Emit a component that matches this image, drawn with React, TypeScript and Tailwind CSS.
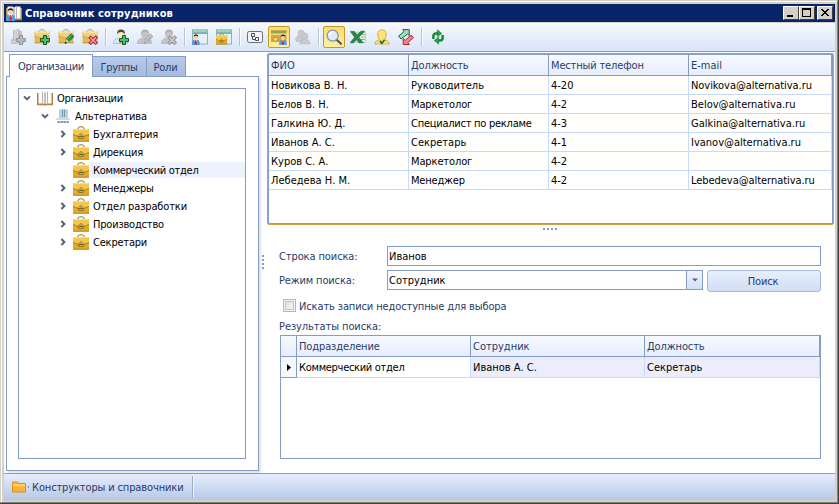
import React from 'react';

type Kids = { children?: React.ReactNode };

const Svg = ({ children, size = 16 }: Kids & { size?: number }) => (
  <svg width={size} height={size} viewBox="0 0 16 16" className="block shrink-0">{children}</svg>
);

const Briefcase = () => (
  <g>
    <path d="M4.500 3Q5.500 .6 8 .6T11.500 3" fill="none" stroke="#a8983c" strokeWidth="1.2" />
    <path d="M0 3h16v12.500H0z" fill="#e2aa28" />
    <path d="M0 3h16v5.500l-5.500 2h-5L0 8.500z" fill="#f3c74e" />
    <path d="M.5 3.500h15" stroke="#fbdc86" />
    <path d="M0 8.500l5.500 2M16 8.500l-5.500 2" fill="none" stroke="#bb8113" strokeWidth="1" />
    <path d="M0 15.200h16" stroke="#b98620" strokeWidth="1" />
    <path d="M5 11q.2-1.600 1.500-2L8 7.400 9.500 9q1.300.4 1.500 2z" fill="#f7d765" stroke="#6d6220" strokeWidth=".8" />
    <rect x="6" y="10.500" width="4" height="2" fill="#e6c24e" stroke="#7b6b24" strokeWidth=".8" />
    <path d="M8 9.200v2" stroke="#4b4318" />
  </g>
);
const Bag = () => (
  <g>
    <path d="M4.500 2.800Q5.500 .6 8 .6T11.500 2.800" fill="none" stroke="#b3a262" strokeWidth="1" />
    <path d="M.5 2.800h15V14H.5z" fill="#e3bb5a" />
    <path d="M.5 2.800h15V7l-5 2h-5l-5-2z" fill="#f0d080" />
    <path d="M1 3.300h14" stroke="#fae7ab" />
    <path d="M.5 7l5 2h5l5-2" fill="none" stroke="#c9973a" strokeWidth=".9" />
    <path d="M.5 13.800h15" stroke="#bd8d34" />
  </g>
);
const Plus = ({ gray = false }: { gray?: boolean }) => (
  <path d="M9.500 6.500h3v3h3v3h-3v3h-3v-3h-3v-3h3z" fill={gray ? '#b9b9bd' : '#4fbd6d'} stroke={gray ? '#909096' : '#075a2a'} strokeWidth="1" />
);
const Pencil = ({ gray = false }: { gray?: boolean }) => (
  <g>
    <path d="M8.200 10 13 4.800 16 7.500 11 12.600z" fill={gray ? '#b5b5b9' : '#23874b'} stroke={gray ? '#a0a0a4' : '#0a6b3a'} strokeWidth=".7" />
    <path d="M8.200 10 7 14.400l4-1.800z" fill={gray ? '#ccc' : '#d7ef8a'} stroke={gray ? '#a0a0a4' : '#8b9a30'} strokeWidth=".6" />
    <path d="M6.600 15l1-2.600 1.500 1.500z" fill={gray ? '#999' : '#1c1c10'} />
    <path d="M9.500 10.300 13.600 6" stroke={gray ? '#ddd' : '#82cb97'} strokeWidth=".8" />
  </g>
);
const Cross = ({ gray = false }: { gray?: boolean }) => (
  <g>
    <path d="M8.700 8.700l5 5M13.700 8.700l-5 5" stroke={gray ? '#919196' : '#a41f34'} strokeWidth="3.400" strokeLinecap="square" />
    <path d="M8.700 8.700l5 5M13.700 8.700l-5 5" stroke={gray ? '#ccc' : '#ff9aa4'} strokeWidth="1.600" strokeLinecap="square" />
  </g>
);
const Person = ({ gray = false }: { gray?: boolean }) => (
  <g>
    <path d="M.5 14.500v-2Q1.500 9.800 5.500 9h4q4 .7 5 3.500v2z" fill={gray ? '#c4c4c8' : '#d3e9fa'} stroke={gray ? '#b3b3b8' : '#8fb9dc'} strokeWidth=".7" />
    <circle cx="8" cy="5.200" r="3.900" fill={gray ? '#c4c4c8' : '#fae7c4'} />
    <path d="M4.200 5Q3.600.8 8 .6q4.300.2 3.900 4.600Q11 3.200 8.400 3 5.600 2.800 4.200 5z" fill={gray ? '#b0b0b5' : '#54492f'} />
    {!gray && <path d="M5.800 9.300l1.600 4.700L9 9.300z" fill="#fff" />}
    {!gray && <path d="M6.900 10h1.200l.5 4H6.400z" fill="#e0823b" />}
  </g>
);
const MiniPerson = () => (
  <g>
    <path d="M0 12.500Q.5 9.500 3 9h2.500q3 .6 3.500 3.500V16H0z" fill="#4d9ee2" />
    <path d="M2.700 9h3.600L4.500 15z" fill="#fff" />
    <path d="M3.900 10h1.200l.8 4-1.400 2-1.400-2z" fill="#dc2921" />
    <circle cx="4.500" cy="6.400" r="2.500" fill="#f9cda2" />
    <path d="M1.800 6.300Q1.700 3.400 4.500 3.300q3 .1 2.800 3Q6 4.800 4.500 5q-1.700 0-2.700 1.300z" fill="#2b1c14" />
  </g>
);
const Card = () => (
  <g>
    <rect x=".5" y=".8" width="15" height="14.200" fill="#e4f1f8" stroke="#8aa9b5" strokeWidth=".9" />
    <path d="M.5 1h15v3.500H.5z" fill="#7fbcb4" />
    <path d="M1 2h14" stroke="#b9e2da" />
    <path d="M1 4.500h14" stroke="#6a98a0" strokeWidth=".7" />
  </g>
);
const Building = () => (
  <g>
    <path d="M3.500 1.500 9 .5v10H3.500zM9 2.500h2.500v8H9z" fill="#c6c6ca" stroke="#b2b2b7" strokeWidth=".7" />
    <path d="M5.200 1.500v9M7.400 1v9.500" stroke="#dedee2" />
    <path d="M1.500 10h12.500l1 2.500H.5z" fill="#c0c0c5" /><path d="M1 13h13v2H1z" fill="#d2d2d6" /><path d="M1.500 14h12" stroke="#aaaab0" strokeDasharray="2 1" />
  </g>
);
const BookIcon = () => (
  <g>
    <path d="M0 3h16v12.200H9L8 16l-1-.8H0z" fill="#b98038" />
    <path d="M1.500 1.500h5L8 2.500V14.500L6.500 13.500h-5z" fill="#fbfbfd" />
    <path d="M14.500 1.500h-5L8 2.500V14.500l1.500-1h5z" fill="#fbfbfd" />
    <path d="M5.500 1.500v12M10.500 1.500v12" stroke="#b4b4bc" strokeWidth="1" />
    <path d="M8 2.500v12" stroke="#85858f" strokeWidth="1" />
  </g>
);

const Btn = ({ children, on = false }: Kids & { on?: boolean }) => (
  <div className={on ? 'flex h-[22px] w-[22px] shrink-0 items-center justify-center rounded-[2px] border border-[#c29b29] bg-linear-to-b from-[#ffd86d] to-[#fff0a1]' : 'flex h-[22px] w-[22px] shrink-0 items-center justify-center'}>
    <Svg>{children}</Svg>
  </div>
);
const Sep = () => (
  <div className="flex h-[18px] w-[5px] shrink-0 justify-center">
    <div className="w-px bg-[#b4c2dc]" /><div className="w-px bg-white" />
  </div>
);

function Toolbar() {
  return (
    <div className="flex h-[29px] shrink-0 items-center gap-[2px] border-b border-[#849cc8] bg-linear-to-b from-[#f5f8ff] to-[#dae5f8] pl-[3px]">
      <Btn><Building /><Plus gray /></Btn>
      <Btn><Bag /><Plus /></Btn>
      <Btn><Bag /><Pencil /></Btn>
      <Btn><Bag /><Cross /></Btn>
      <Sep />
      <Btn><Person /><Plus /></Btn>
      <Btn><Person gray /><Pencil gray /></Btn>
      <Btn><Person gray /><Cross gray /></Btn>
      <Sep />
      <Btn><Card /><g transform="translate(0 2.500) scale(.85)"><MiniPerson /></g></Btn>
      <Btn><Card /><g transform="translate(0 4.500) scale(.7)"><Briefcase /></g></Btn>
      <Sep />
      <Btn>
        <rect x=".5" y="2.500" width="15" height="11" rx="1.700" fill="#f4f4f6" stroke="#6d6d72" />
        <path d="M4.500 4.500h3v3h-3zM8.500 8.500h3v3h-3zM5.500 8v2.500h3" fill="none" stroke="#4c4c52" />
      </Btn>
      <Btn on>
        <path d="M0 1.500h15.500V13H0z" fill="#d4aa3c" /><path d="M0 1.500h15.500v3H0z" fill="#98a158" /><path d="M0 5.200h15.500" stroke="#fae98d" strokeWidth="1.200" />
        <path d="M4 8q2 .4 3 2.500L4.500 12.500 2 10.500z" fill="#f7df75" stroke="#94752a" strokeWidth=".6" />
        <g transform="translate(8.200 2.800) scale(.83)"><MiniPerson /></g>
      </Btn>
      <Btn>
        <g fill="#c9c9ce" stroke="#b9b9bf" strokeWidth=".6"><path d="M.5 10.500q0-3 3-3.500l5 .5 1 4.500-8 .5z" /><circle cx="6" cy="4.200" r="3.200" /><path d="M4.600 15q.2-3.700 3.800-4.600h3q3.600.9 3.900 4.600z" /><circle cx="9.800" cy="7.200" r="3.300" /></g>
      </Btn>
      <Sep />
      <Btn on>
        <path d="M10.600 10.800l4.400 4" stroke="#4d5468" strokeWidth="2.200" strokeLinecap="round" />
        <circle cx="6.700" cy="6.600" r="5.500" fill="#dceefb" stroke="#8494b0" strokeWidth="1.200" />
        <path d="M3.300 6.200Q3.600 3.200 7 2.800" stroke="#fff" strokeWidth="1.500" fill="none" />
      </Btn>
      <Btn>
        <path d="M7 3.200h8.500v10.300H6z" fill="#eef7f0" stroke="#8bbd95" strokeWidth=".6" /><path d="M11 5.500h4M11 8h4M11 10.500h4" stroke="#79b884" />
        <path d="M.4 2.500h4.200L7 5.900 11 2.200h3.700L8.800 8.200l4.500 5.600H9L6.500 10.600 3.700 13.800H.2l4.400-5.600z" fill="#2b8545" stroke="#1b6a34" strokeWidth=".6" />
      </Btn>
      <Btn>
        <path d="M.6 15Q.8 12 5.500 10.700 3.700 8.500 3.700 5 4 .9 8 .9T12.300 5q0 3.500-1.800 5.700Q15.200 12 15.400 15z" fill="#ffe27a" stroke="#d9a932" strokeWidth=".9" />
        <path d="M5.800 11.800l2 2.500 2.800-3.500" fill="none" stroke="#1f7243" strokeWidth="1.800" />
      </Btn>
      <Btn>
        <path d="M.6 7 6 2.700 4.800.6h6.400v6L9.500 5 3 10z" fill="#a8dbc0" stroke="#0f6440" strokeWidth="1" />
        <path d="M15.500 8.500 9.800 13.600l1.700 1.900H5.200V9.500l1.900 1.900L13 6.200z" fill="#f5838c" stroke="#a32639" strokeWidth="1" />
      </Btn>
      <Sep />
      <Btn>
        <g transform="translate(1 0)">
          <path d="M3.400 10V6.800Q3.600 4.400 6 4.400h2" fill="none" stroke="#19883b" strokeWidth="2.500" /><path d="M7.300.8l4.500 3.600-4.500 3.600z" fill="#28a348" stroke="#087329" strokeWidth=".5" />
          <path d="M12.600 6v3.200q-.2 2.400-2.600 2.400H8" fill="none" stroke="#19883b" strokeWidth="2.500" /><path d="M8.700 8v7.200l-4.500-3.600z" fill="#28a348" stroke="#087329" strokeWidth=".5" />
        </g>
      </Btn>
    </div>
  );
}

const WinBtn = ({ children }: Kids) => (
  <div className="h-[14px] w-4 border border-t-white border-r-[#404040] border-b-[#404040] border-l-white bg-[#d4d0c8]">
    <svg width="14" height="12" viewBox="0 0 14 12" shapeRendering="crispEdges">{children}</svg>
  </div>
);

function TitleBar() {
  return (
    <div className="flex h-[18px] shrink-0 items-center bg-[#0a246a] pr-[2px] pl-[2px]">
      <Svg><BookIcon /><MiniPerson /></Svg>
      <div className="ml-[3px] flex-1 font-['DejaVu_Sans_Condensed','DejaVu_Sans',sans-serif] text-[11px] font-bold tracking-[0.13px] text-white">Справочник сотрудников</div>
      <div className="flex">
        <WinBtn><path d="M3 8h6v2H3z" /></WinBtn>
        <WinBtn><path d="M2 1h9v9H2zM3 3v6h7V3z" fillRule="evenodd" /></WinBtn>
        <div className="w-[2px]" />
        <WinBtn><path d="M3 2h2v1h1v1h2V3h1V2h2v1h-1v1H9v1H8v1h1v1h1v1h1v1H9V8H8V7H6v1H5v1H3V8h1V7h1V6h1V5H5V4H4V3H3z" /></WinBtn>
      </div>
    </div>
  );
}

const Chevron = ({ open = false }: { open?: boolean }) => (
  <svg width="8" height="8" viewBox="0 0 8 8" className="block shrink-0"><path d={open ? 'M1 2.400l3 3 3-3' : 'M2.400 1l3 3-3 3'} fill="none" stroke="#56617f" strokeWidth="2" /></svg>
);

const departments = [
  ['Бухгалтерия', true, 'tracking-[-0.15px]'],
  ['Дирекция', true, 'tracking-[-0.2px]'],
  ['Коммерческий отдел', false, 'tracking-[-0.3px]'],
  ['Менеджеры', true, 'tracking-[-0.28px]'],
  ['Отдел разработки', true, 'tracking-[-0.14px]'],
  ['Производство', true, 'tracking-[-0.2px]'],
  ['Секретари', true, 'tracking-[-0.2px]'],
] as const;

function LeftPanel() {
  return (
    <div className="flex w-[253px] shrink-0 flex-col">
      <div className="z-10 -mb-px ml-[3px] flex h-[23px] items-end text-[#283c68]">
        <div className="flex h-[23px] w-[84px] items-center justify-center border border-b-0 border-[#849cc8] bg-white tracking-[-0.3px]">Организации</div>
        <div className="flex h-[21px] w-[54px] items-center justify-center border border-l-0 border-[#849cc8] bg-linear-to-b from-[#b8cae8] to-[#a5bbdf] pt-px pr-px tracking-[-0.3px]">Группы</div>
        <div className="flex h-[21px] w-[39px] items-center justify-center border border-l-0 border-[#849cc8] bg-linear-to-b from-[#b8cae8] to-[#a5bbdf] pt-px pr-px tracking-[-0.2px]">Роли</div>
      </div>
      <div className="flex h-[395px] flex-col border border-[#849cc8] py-[11px] pr-3 pl-[11px] shadow-[2px_2px_2px_#e1e1e1]">
        <div className="flex-1 border border-[#849cc8] text-black">
          <div className="flex h-[18px] items-center pl-[4px]"><Chevron open /><span className="ml-[6px]"><Svg><BookIcon /></Svg></span><span className="ml-1 tracking-[-0.3px]">Организации</span></div>
          <div className="flex h-[18px] items-center pl-[22px]"><Chevron open />
            <span className="ml-[6px]"><Svg>
              <path d="M4 2l2.500-1V10H4zM6.500 1h5v9h-5z" fill="#b9d3dd" /><path d="M11.500 1l1 1v8h-1z" fill="#8eabb6" /><path d="M7.500 2v7M9.500 2v7" stroke="#6e9daf" />
              <path d="M2.500 9.500h11L15.500 12H.5z" fill="#d5dade" /><path d="M2 13h12v2H2z" fill="#aebfcd" /><path d="M3 14h11" stroke="#6685a2" strokeDasharray="2 1" />
            </Svg></span><span className="ml-1 tracking-[-0.15px]">Альтернатива</span></div>
          {departments.map(([name, child, fit]) => (
            <div key={name} className="flex h-[18px] items-center pl-10">
              {child ? <Chevron /> : <div className="w-2" />}
              <span className="ml-[6px]"><Svg><Briefcase /></Svg></span>
              <div className={child ? 'pl-1' : 'ml-px flex h-4 flex-1 items-center bg-[#edf2fe] pl-[3px]'}><span className={fit}>{name}</span></div>
            </div>
          ))}
        </div>
      </div>
    </div>
  );
}

const staff = [
  ['Новикова В. Н.', 'Руководитель', '4-20', 'Novikova@alternativa.ru'],
  ['Белов В. Н.', 'Маркетолог', '4-2', 'Belov@alternativa.ru'],
  ['Галкина Ю. Д.', 'Специалист по рекламе', '4-3', 'Galkina@alternativa.ru'],
  ['Иванов А. С.', 'Секретарь', '4-1', 'Ivanov@alternativa.ru'],
  ['Куров С. А.', 'Маркетолог', '4-2', ''],
  ['Лебедева Н. М.', 'Менеджер', '4-2', 'Lebedeva@alternativa.ru'],
];

const cellTracking: Record<string, string> = {
  'Специалист по рекламе': 'tracking-[-0.25px]',
  'Маркетолог': 'tracking-[-0.12px]',
  'Менеджер': 'tracking-[-0.2px]',
  'Должность': 'tracking-[-0.12px]',
  'Местный телефон': 'tracking-[-0.15px]',
  'Novikova@alternativa.ru': 'tracking-[-0.06px]',
  'Lebedeva@alternativa.ru': 'tracking-[-0.05px]',
  'Подразделение': 'tracking-[-0.12px]',
};

const CellText = ({ text }: { text: string }) => <span className={cellTracking[text]}>{text}</span>;

function StaffTable() {
  return (
    <div className="h-[172px] rounded-[2px] border border-[#cda343]">
      <div className="h-[170px] border border-[#849cc8]">
        <div className="grid h-[21px] grid-cols-[140px_140px_140px_1fr] border-b border-[#849cc8] bg-linear-to-b from-[#f7faff] to-[#e7edfc] text-[#283c68]">
          {['ФИО', 'Должность', 'Местный телефон', 'E-mail'].map((h) => <div key={h} className="flex items-center border-r border-[#849cc8] pl-[2px]"><CellText text={h} /></div>)}
        </div>
        {staff.map((row) => (
          <div key={row[0]} className="grid h-[19px] grid-cols-[140px_140px_140px_1fr] odd:bg-white even:bg-[#fffefa]">
            {row.map((cell, i) => <div key={i} className="flex items-center border-r border-b border-[#c8dafa] pl-[2px] whitespace-nowrap"><CellText text={cell} /></div>)}
          </div>
        ))}
      </div>
    </div>
  );
}

function Search() {
  return (
    <div className="ml-[13px] w-[541px] text-[#283c68]">
      <div className="mt-[13px] flex h-5 items-center">
        <div className="-ml-px mr-px w-[107px] shrink-0 tracking-[-0.1px]">Строка поиска:</div>
        <div className="flex h-5 flex-1 items-center border border-[#849cc8] pl-px text-black">Иванов</div>
      </div>
      <div className="mt-1 flex h-[22px]">
        <div className="-ml-px mr-px flex h-5 w-[107px] shrink-0 items-center tracking-[-0.15px]">Режим поиска:</div>
        <div className="flex h-5 w-[316px] items-center border border-[#849cc8] pl-px text-black">
          <span className="flex-1">Сотрудник</span>
          <div className="flex h-full w-4 items-center justify-center border-l border-[#849cc8] bg-linear-to-b from-[#f0f5ff] to-[#d2dff5]"><svg width="6" height="4" viewBox="0 0 6 4"><path d="M0 .5h6L3 3.500z" fill="#56617f" /></svg></div>
        </div>
        <div className="ml-1 flex h-[22px] flex-1 items-center justify-center rounded-[3px] border border-[#a9b9db] bg-linear-to-b from-[#e8effd] to-[#d0ddf4] pr-[2px] tracking-[-0.2px]">Поиск</div>
      </div>
      <div className="mt-[7px] flex h-[14px] items-center pl-[3px]">
        <div className="-mt-px flex h-[13px] w-[13px] items-center justify-center border border-[#b2b6d2] bg-[#f2f2f5]"><div className="h-[9px] w-[9px] border border-[#c7c4ce] bg-linear-to-br from-[#e3dfe3] to-[#f7f5f5]" /></div>
        <span className="ml-[3px] tracking-[-0.12px]">Искать записи недоступные для выбора</span>
      </div>
      <div className="-ml-px mt-[6px] flex h-[14px] items-center tracking-[-0.08px]">Результаты поиска:</div>
      <div className="mt-[2px] h-[124px] border border-[#849cc8] text-black">
        <div className="grid h-[21px] grid-cols-[16px_174px_174px_1fr] border-b border-[#849cc8] bg-linear-to-b from-[#f7faff] to-[#e7edfc] text-[#283c68]">
          {['', 'Подразделение', 'Сотрудник', 'Должность'].map((h) => <div key={h} className="flex items-center border-r border-[#849cc8] pl-[2px]"><CellText text={h} /></div>)}
        </div>
        <div className="grid h-[21px] grid-cols-[16px_174px_174px_1fr]">
          <div className="flex items-center justify-center border-r border-b border-[#849cc8] bg-[#f5f8ff] pl-px"><svg width="5" height="7" viewBox="0 0 5 7"><path d="M0 0l4 3.500L0 7z" /></svg></div>
          <div className="flex items-center border-r border-b border-[#c8dafa] pl-[2px] tracking-[-0.3px]">Коммерческий отдел</div>
          <div className="flex items-center border-r border-b border-[#c8dafa] bg-[#ececfb] pl-[2px]">Иванов А. С.</div>
          <div className="flex items-center border-r border-b border-[#c8dafa] bg-[#ececfb] pl-[2px]">Секретарь</div>
        </div>
      </div>
    </div>
  );
}

const Dot = () => <i className="block h-[2px] w-[2px] bg-[#849cc8]" />;

export default function App() {
  return (
    <div className="h-[504px] w-[839px] overflow-hidden border-r border-b border-[#404040] bg-[#d4d0c8] font-['DejaVu_Sans_Condensed','DejaVu_Sans',sans-serif] text-[11px] leading-[13px]">
      <div className="h-[503px] border-t border-r border-b border-l border-t-[#d4d0c8] border-r-[#808080] border-b-[#808080] border-l-[#d4d0c8]">
        <div className="flex h-[501px] flex-col border-t border-l border-white pt-[2px] pr-[2px] pb-[2px] pl-[2px]">
          <TitleBar />
          <div className="h-px shrink-0 bg-[#d4d0c8]" />
          <Toolbar />
          <div className="flex h-[421px] shrink-0 bg-white pt-[2px] pl-[2px]">
            <LeftPanel />
            <div className="flex w-2 shrink-0 flex-col items-center gap-[2px] pt-[201px]"><Dot /><Dot /><Dot /><Dot /></div>
            <div className="mt-[-1px] w-[567px] shrink-0">
              <StaffTable />
              <div className="-ml-[2px] flex h-[8px] items-center justify-center gap-[2px]"><Dot /><Dot /><Dot /><Dot /></div>
              <Search />
            </div>
          </div>
          <div className="flex flex-1 items-center border-t border-[#849cc8] bg-linear-to-b from-[#e6edff] to-[#b7c8e4] pl-2 text-[#283c68]">
            <svg width="14" height="12" viewBox="0 0 14 12"><path d="M.5 1h5l1 1.500h7V11H.5z" fill="#f9b13c" stroke="#e38c14" /><path d="M1 4.200h12" stroke="#ffd66c" strokeWidth="2" /></svg>
            <span className="ml-[2px] h-[2px] w-px self-center bg-[#8290ac]" />
            <span className="ml-[3px] w-[160px] tracking-[-0.13px]">Конструкторы и справочники</span>
            <span className="h-[22px] w-px bg-[#99add0]" /><span className="h-[22px] w-px bg-[#eff4ff]" />
          </div>
        </div>
      </div>
    </div>
  );
}
